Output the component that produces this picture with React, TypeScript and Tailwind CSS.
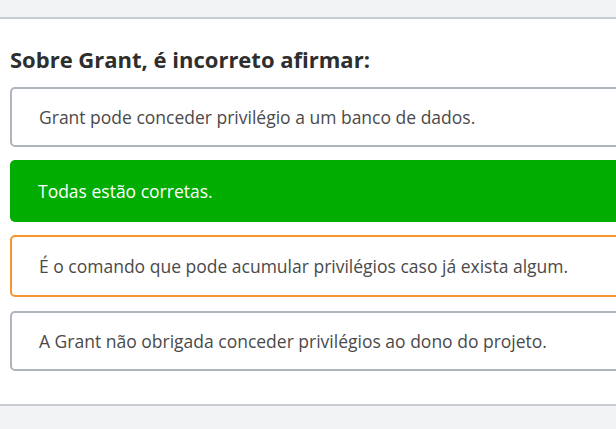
export default function App() {
  const font = { fontFamily: '"Open Sans", "Noto Sans", sans-serif' };
  return (
    <div className="w-[616px] h-[429px] overflow-hidden bg-white flex flex-col" style={font}>
      <div className="h-[19px] shrink-0 bg-[#f2f3f5] border-b-2 border-[#c9cdd2]" />
      <div className="flex-1 flex flex-col pl-[10px]">
        <h1 className="mt-[25px] text-[22px] leading-[30px] font-bold text-[#2e2e2e]">
          Sobre Grant, é incorreto afirmar:
        </h1>
        <div className="mt-[13px] flex flex-col w-[620px]">
          <div className="h-[60px] flex items-center pl-[27px] pt-px border-2 border-[#aeb5bc] rounded-[5px] bg-white text-[17.5px] text-[#4a4a4a]">
            Grant pode conceder privilégio a um banco de dados.
          </div>
          <div className="mt-[13px] h-[62px] flex items-center pl-[28px] rounded-[5px] bg-[#00ad00] text-[17.5px] text-white">
            Todas estão corretas.
          </div>
          <div className="mt-[13px] h-[62px] flex items-center pl-[27px] border-2 border-[#f7952e] rounded-[5px] bg-white text-[17.5px] text-[#4a4a4a]">
            É o comando que pode acumular privilégios caso já exista algum.
          </div>
          <div className="mt-[14px] h-[60px] flex items-center pl-[27px] pt-px border-2 border-[#aeb5bc] rounded-[5px] bg-white text-[17.5px] text-[#4a4a4a]">
            A Grant não obrigada conceder privilégios ao dono do projeto.
          </div>
        </div>
      </div>
      <div className="h-[25px] shrink-0 bg-[#f2f3f5] border-t-2 border-[#c9cdd2]" />
    </div>
  );
}
